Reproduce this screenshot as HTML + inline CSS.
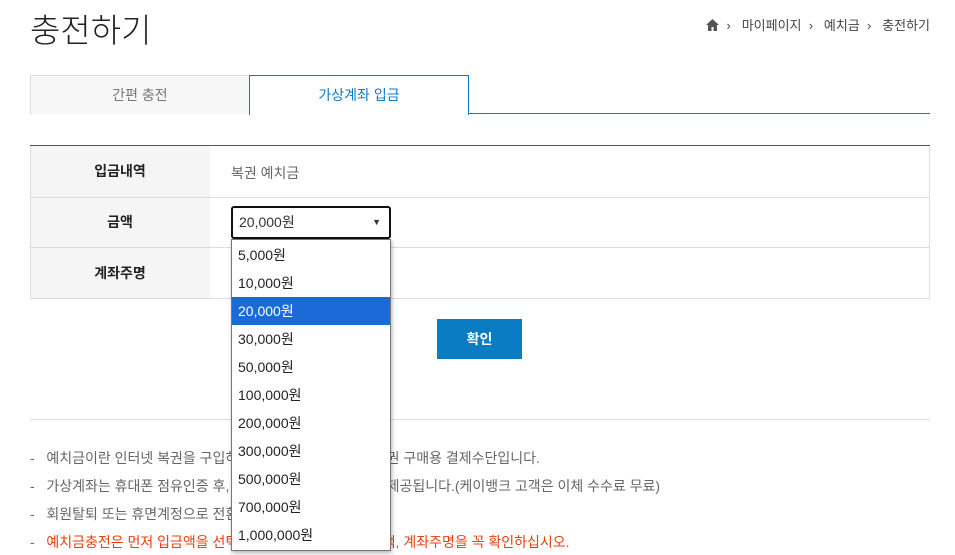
<!DOCTYPE html><html><head><meta charset="utf-8"><style>
body{margin:0;width:955px;height:555px;overflow:hidden;background:#fff;font-family:"Liberation Sans","Noto Sans CJK KR",sans-serif;position:relative;color:#333}
.a{position:absolute}
h1{position:absolute;left:30px;top:4px;margin:0;font-size:33px;font-weight:300;color:#222}
.bc{right:25px;top:15px;font-size:13px;color:#444}
.tab{top:75px;height:38px;width:218px;text-align:center;line-height:39px;font-size:14px}
.row{left:30px;width:900px;border-bottom:1px solid #ddd}
.lab{left:30px;width:180px;background:#f5f5f5;text-align:center;font-size:14px;color:#222;font-weight:bold}
.note{left:30px;font-size:14px;color:#666}
.dd div{height:28px;line-height:28px;padding-left:6px;font-size:14px;color:#222}
</style></head><body>
<h1>충전하기</h1>
<div class="a bc"><svg width="13" height="12" viewBox="0 0 13 12" style="vertical-align:-1px"><path d="M6.5 0L0 6h2v6h3.5V8h2v4H11V6h2z" fill="#555"/></svg> &nbsp;›&nbsp;&nbsp; 마이페이지 &nbsp;›&nbsp;&nbsp; 예치금 &nbsp;›&nbsp;&nbsp; 충전하기</div>
<div class="a" style="left:30px;top:113px;width:900px;height:1px;background:#0a7cc4"></div>
<div class="a tab" style="left:30px;background:#f7f7f7;border:1px solid #ddd;border-bottom:none;color:#777">간편 충전</div>
<div class="a tab" style="left:249px;background:#fff;border:1px solid #0a7cc4;border-bottom:none;height:39px;color:#0a7cc4">가상계좌 입금</div>
<div class="a" style="left:30px;top:145px;width:900px;height:1px;background:#555"></div>
<div class="a lab" style="top:146px;height:51px;line-height:51px">입금내역</div>
<div class="a lab" style="top:197px;height:51px;line-height:51px">금액</div>
<div class="a lab" style="top:248px;height:50px;line-height:50px">계좌주명</div>
<div class="a row" style="top:146px;height:51px;border-left:1px solid #ddd;border-right:1px solid #ddd;width:898px;left:30px"></div>
<div class="a row" style="top:197px;height:50px;border-left:1px solid #ddd;border-right:1px solid #ddd;width:898px;left:30px"></div>
<div class="a row" style="top:248px;height:50px;border-left:1px solid #ddd;border-right:1px solid #ddd;width:898px;left:30px"></div>
<div class="a" style="left:231px;top:163px;font-size:14px;color:#666">복권 예치금</div>
<div class="a" style="left:231px;top:206px;width:156px;height:29px;border:2px solid #111;border-radius:3px;background:#fff;font-size:14px;line-height:29px;color:#333"><span style="padding-left:6px">20,000원</span><span style="position:absolute;right:8px;font-size:9px">▼</span></div>
<div class="a" style="left:437px;top:319px;width:85px;height:40px;background:#0a7cc4;color:#fff;font-size:14px;font-weight:bold;text-align:center;line-height:40px">확인</div>
<div class="a" style="left:30px;top:419px;width:900px;height:1px;background:#ddd"></div>
<div class="a note" style="top:448px">-&nbsp;&nbsp; 예치금이란 인터넷 복권을 구입하실 때 사용하실 수 있는 복권 구매용 결제수단입니다.</div>
<div class="a note" style="top:476px">-&nbsp;&nbsp; 가상계좌는 휴대폰 점유인증 후, 케이뱅크 가상계좌 번호가 제공됩니다.(케이뱅크 고객은 이체 수수료 무료)</div>
<div class="a note" style="top:504px">-&nbsp;&nbsp; 회원탈퇴 또는 휴면계정으로 전환시 가상계좌는 해지됩니다.</div>
<div class="a note" style="top:532px;color:#e8400c">-&nbsp;&nbsp; 예치금충전은 먼저 입금액을 선택 후 가상계좌 번호와 입금액, 계좌주명을 꼭 확인하십시오.</div>
<div class="a dd" style="left:231px;top:239px;width:158px;height:309px;border:1px solid #777;background:#fff;box-shadow:1px 2px 4px rgba(0,0,0,.3);padding-top:1px">
<div>5,000원</div><div>10,000원</div><div style="background:#1a6bd8;color:#fff">20,000원</div><div>30,000원</div><div>50,000원</div><div>100,000원</div><div>200,000원</div><div>300,000원</div><div>500,000원</div><div>700,000원</div><div>1,000,000원</div>
</div>
</body></html>
